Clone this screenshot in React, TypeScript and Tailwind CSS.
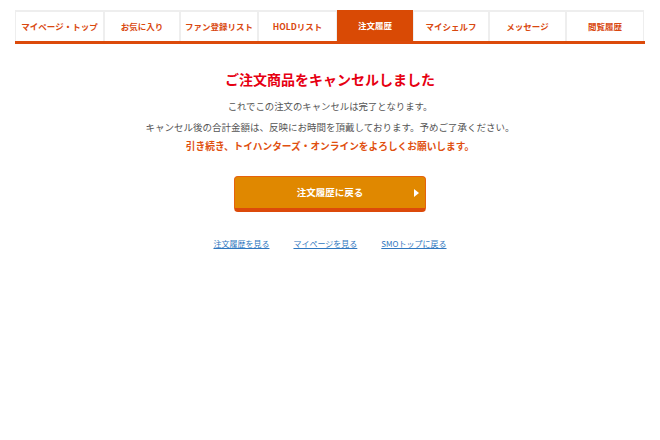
const tabs = [
  { label: "マイページ・トップ", w: "w-[89px]" },
  { label: "お気に入り", w: "w-[76px]" },
  { label: "ファン登録リスト", w: "w-[78px]" },
  { label: "HOLDリスト", w: "w-[79px]" },
  { label: "注文履歴", w: "w-[76px]", active: true },
  { label: "マイシェルフ", w: "w-[76px]" },
  { label: "メッセージ", w: "w-[77px]" },
  { label: "閲覧履歴", w: "w-[78px]" },
];

const links = ["注文履歴を見る", "マイページを見る", "SMOトップに戻る"];

export default function App() {
  return (
    <div className="w-[660px] h-[440px] bg-white font-['Noto_Sans_CJK_JP','Noto_Sans',sans-serif]">
      {/* Tabs */}
      <div className="pt-[10px] px-[15px]">
        <ul className="flex border-b-[3px] border-[#dc4a0a]">
          {tabs.map((t) => (
            <li
              key={t.label}
              className={`${t.w} h-[31px] flex items-center justify-center whitespace-nowrap text-[8.5px] font-bold ${
                t.active
                  ? "bg-[#d94a05] text-white"
                  : "bg-white text-[#d9480f] border-t-2 border-l border-r border-[#eeeeee]"
              }`}
            >
              {t.label}
            </li>
          ))}
        </ul>
      </div>

      {/* Message */}
      <div className="flex flex-col items-center mt-[24px]">
        <h1 className="text-[14px] font-bold text-[#e60012] leading-[22px]">
          ご注文商品をキャンセルしました
        </h1>
        <p className="mt-[9px] text-[9.4px] text-[#555] leading-[14px]">
          これでこの注文のキャンセルは完了となります。
        </p>
        <p className="mt-[7px] text-[9.5px] text-[#555] leading-[14px]">
          キャンセル後の合計金額は、反映にお時間を頂戴しております。予めご了承ください。
        </p>
        <p className="mt-[5px] text-[9.7px] font-bold text-[#e0500f] leading-[14px]">
          引き続き、トイハンターズ・オンラインをよろしくお願いします。
        </p>

        <button className="mt-[23px] relative w-[192px] h-[36px] rounded-[4px] bg-[#e08800] border border-[#e6620c] border-b-[4px] border-b-[#dc4a0a] text-white text-[9.5px] font-bold flex items-center justify-center">
          注文履歴に戻る
          <span className="absolute right-[6px] top-1/2 -translate-y-1/2 w-0 h-0 border-y-[4px] border-y-transparent border-l-[5px] border-l-white" />
        </button>

        <div className="mt-[26px] flex gap-[24px]">
          {links.map((l) => (
            <a key={l} href="#" className="text-[8px] text-[#2f77c0] underline leading-[12px]">
              {l}
            </a>
          ))}
        </div>
      </div>
    </div>
  );
}
